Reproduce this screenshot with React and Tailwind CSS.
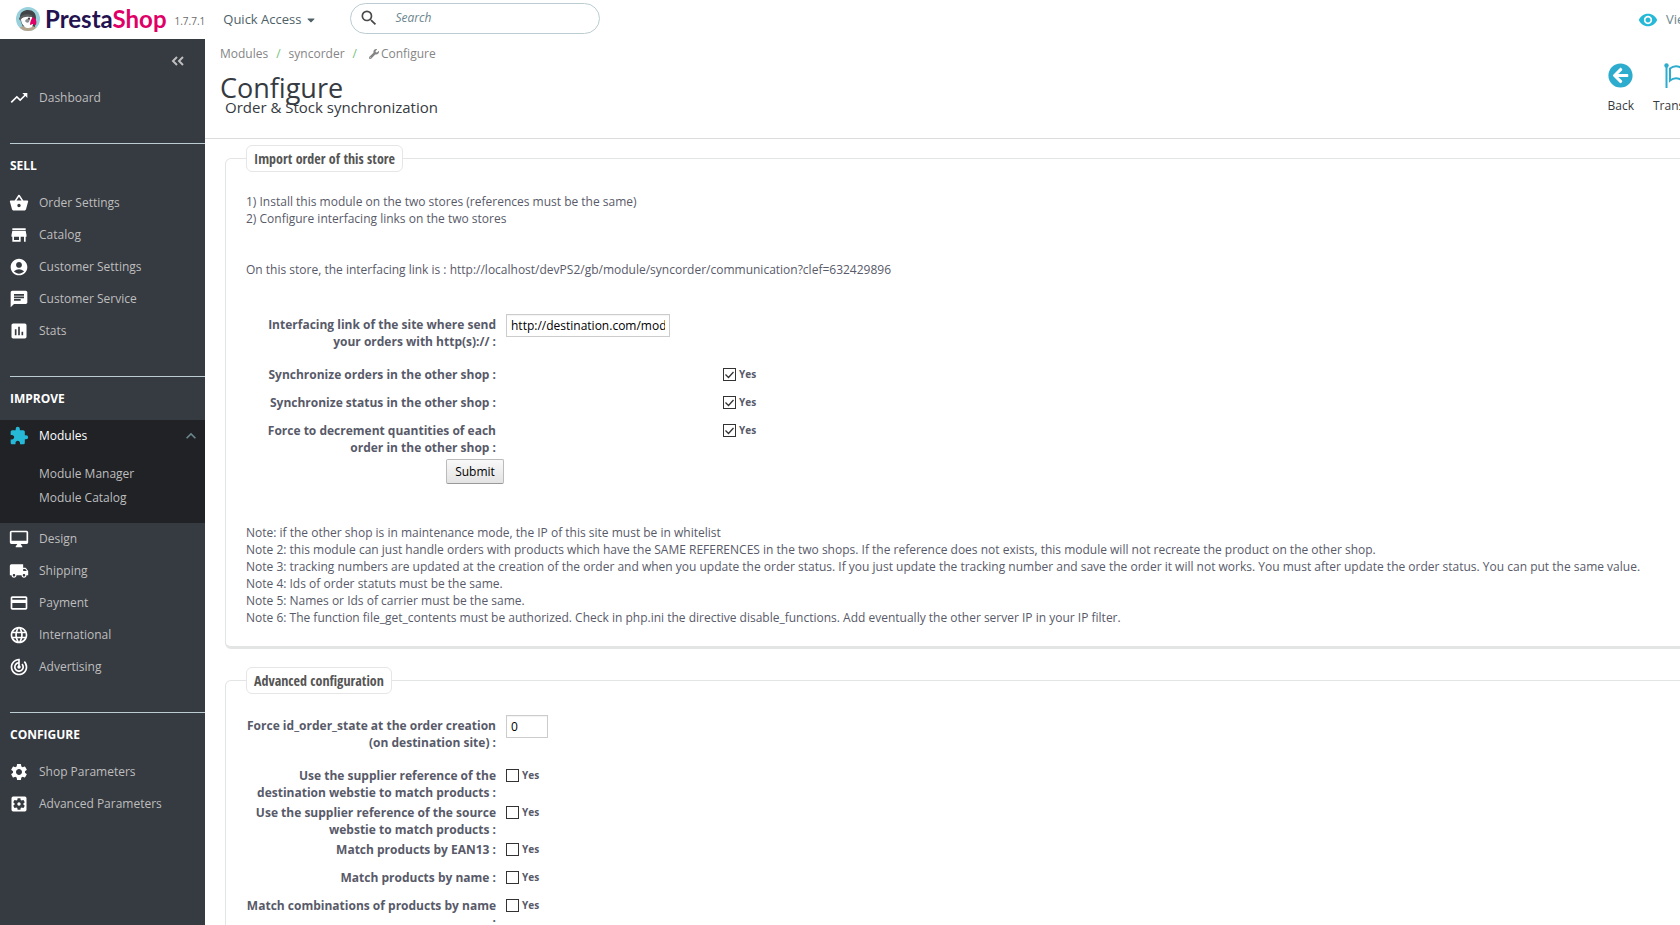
import React, { useState } from "react";
import {
  MdTrendingUp,
  MdShoppingBasket,
  MdStore,
  MdAccountCircle,
  MdChat,
  MdAssessment,
  MdExtension,
  MdLocalShipping,
  MdPayment,
  MdLanguage,
  MdTrackChanges,
  MdSettings,
  MdSettingsApplications,
  MdKeyboardArrowUp,
  MdSearch,
  MdVisibility,
} from "react-icons/md";
import { FaWrench, FaArrowCircleLeft, FaCaretDown } from "react-icons/fa";

const DesktopIcon = ({ size, className }) => (
  <svg width={size} height={size} viewBox="0 0 24 24" fill="currentColor" className={className} aria-hidden="true">
    <path d="M21 2H3c-1.100 0-2 .9-2 2v12c0 1.100.9 2 2 2h7l-2 3v1h8v-1l-2-3h7c1.100 0 2-.9 2-2V4c0-1.100-.9-2-2-2zm0 12H3V4h18v10z" />
  </svg>
);

const sellItems = [
  { label: "Order Settings", icon: MdShoppingBasket },
  { label: "Catalog", icon: MdStore },
  { label: "Customer Settings", icon: MdAccountCircle },
  { label: "Customer Service", icon: MdChat },
  { label: "Stats", icon: MdAssessment },
];

const improveItems = [
  { label: "Design", icon: DesktopIcon },
  { label: "Shipping", icon: MdLocalShipping },
  { label: "Payment", icon: MdPayment },
  { label: "International", icon: MdLanguage },
  { label: "Advertising", icon: MdTrackChanges },
];

const configureItems = [
  { label: "Shop Parameters", icon: MdSettings },
  { label: "Advanced Parameters", icon: MdSettingsApplications },
];

const Puffin = () => (
  <svg width="24" height="24" viewBox="0 0 24 24" aria-hidden="true">
    <clipPath id="badge">
      <circle cx="12" cy="12" r="12" />
    </clipPath>
    <g clipPath="url(#badge)">
      <rect width="24" height="24" fill="#98d1dc" />
      <path d="M4 10C4 5 8 3 12 3c5 0 8 3 8 8l-1 9H7c-1-3-3-6-3-10z" fill="#414547" />
      <path d="M3 24v-3c4-3 14-3 18 0v3z" fill="#b5a48c" />
      <path d="M5 12c2-3 7-4 11-2l2 5-2 5c-3 2-7 1-8-1-2-2-3-4-3-7z" fill="#fff" />
      <path d="M3 11c3-4 9-5 14-2l-3 1c-4-1-7 0-11 3z" fill="#5b5f60" />
      <path d="M9 14c1-2 3-3 5-2l-1 3c-1 1-3 1-4-1z" fill="#8b8f90" />
      <path d="M17 10c3 2 4 4 3 8l-3-1-3 1c0-3 1-6 3-8z" fill="#df0067" />
      <circle cx="13" cy="11.500" r="1" fill="#333" />
    </g>
  </svg>
);

const FlagIcon = () => (
  <svg width="30" height="25" viewBox="0 0 30 25" fill="none" stroke="#2eacce" strokeWidth="2" aria-hidden="true">
    <circle cx="2.500" cy="2.500" r="2.200" fill="#2eacce" stroke="none" />
    <path d="M2.500 3v22" />
    <path d="M6 5.500c3-2.500 7-3 11-1s7 2 12 0v12c-5 2-8 2-12 0s-8-1.500-11 1z" />
  </svg>
);

const NavItem = ({ label, icon: Icon }) => (
  <li>
    <a href="#" className="flex h-8 items-center gap-[10px] pl-[9px] text-[#bebebe]">
      <Icon size={20} className="shrink-0 text-white" />
      {label}
    </a>
  </li>
);

const NavSection = ({ title, children }) => (
  <section className="mt-[29px]">
    <div className="ml-[10px] flex h-11 items-center border-t border-[#bbcdd2]">
      <h2 className="font-bold text-white">{title}</h2>
    </div>
    <ul>{children}</ul>
  </section>
);

const Sidebar = () => (
  <nav className="w-[205px] shrink-0 bg-[#363a41] text-[12px]">
    <div className="flex h-[43px] items-center justify-end pr-5">
      <button aria-label="Collapse menu" className="text-[#bebebe]">
        <svg width="14" height="10" viewBox="0 0 14 10" fill="none" stroke="currentColor" strokeWidth="2">
          <path d="M6 1L2 5l4 4M12 1L8 5l4 4" />
        </svg>
      </button>
    </div>
    <ul>
      <NavItem label="Dashboard" icon={MdTrendingUp} />
    </ul>
    <NavSection title="SELL">
      {sellItems.map((item) => (
        <NavItem key={item.label} {...item} />
      ))}
    </NavSection>
    <NavSection title="IMPROVE">
      <li className="bg-[#202226] pb-[13px]">
        <a href="#" className="flex h-8 items-center gap-[10px] pr-1 pl-[9px] text-white">
          <MdExtension size={20} className="text-[#25b9d7]" />
          <span className="grow">Modules</span>
          <MdKeyboardArrowUp size={20} className="text-[#6c868e]" />
        </a>
        <ul className="pt-[10px] pl-[39px] leading-6 text-[#bebebe]">
          <li>
            <a href="#">Module Manager</a>
          </li>
          <li>
            <a href="#">Module Catalog</a>
          </li>
        </ul>
      </li>
      {improveItems.map((item) => (
        <NavItem key={item.label} {...item} />
      ))}
    </NavSection>
    <NavSection title="CONFIGURE">
      {configureItems.map((item) => (
        <NavItem key={item.label} {...item} />
      ))}
    </NavSection>
  </nav>
);

const TopBar = () => (
  <header className="flex h-[39px] shrink-0 items-center overflow-hidden pl-4">
    <a href="#" className="flex items-center gap-[5px] pb-px">
      <Puffin />
      <span className="font-[Lato,sans-serif] text-[24px] leading-7 font-bold text-[#24114f]">
        Presta<span className="text-[#df0067]">Shop</span>
      </span>
    </a>
    <span className="ml-2 pt-1 text-[10px] text-[#6c6c6c]">1.7.7.1</span>
    <button className="ml-[18px] flex items-center gap-1 text-[13px] text-[#4e6167]">
      Quick Access
      <FaCaretDown size={12} />
    </button>
    <label className="mb-[3px] ml-[33px] flex h-[31px] w-[250px] items-center rounded-full border border-[#bbcdd2] pl-2">
      <MdSearch size={20} className="shrink-0 text-[#4a4a4a]" />
      <input
        type="text"
        aria-label="Search"
        placeholder="Search"
        className="ml-4 w-40 text-[12px] italic outline-none placeholder:text-[#6c868e]"
      />
    </label>
    <a href="#" className="-mr-[76px] ml-auto flex w-[118px] shrink-0 items-center gap-2 text-[13px] whitespace-nowrap text-[#6c868e]">
      <MdVisibility size={20} className="shrink-0 text-[#25b9d7]" />
      View my shop
    </a>
  </header>
);

const PageHead = () => (
  <div className="flex h-[100px] justify-between border-b border-[#dcdcdc] pl-[15px]">
    <div>
      <ol className="flex items-center pt-[5px] text-[12px] leading-5 text-[#858585]">
        <li>
          <a href="#">Modules</a>
        </li>
        <li className="px-2 text-[#72c279]">/</li>
        <li>
          <a href="#">syncorder</a>
        </li>
        <li className="px-2 text-[#72c279]">/</li>
        <li className="flex items-center gap-[2px] pl-1">
          <FaWrench size={10} />
          Configure
        </li>
      </ol>
      <h1 className="pt-[6px] text-[27px] leading-9 text-[#363a41]">Configure</h1>
      <h4 className="-mt-[9px] pl-[5px] text-[15px] leading-5 text-[#363a41]">Order &amp; Stock synchronization</h4>
    </div>
    <div className="-mr-[32px] flex shrink-0 gap-3 pt-6 text-[12px] text-[#363a41]">
      <a href="#" className="flex flex-col items-center gap-[9px]">
        <FaArrowCircleLeft size={25} className="text-[#2eacce]" />
        Back
      </a>
      <a href="#" className="flex w-[66px] flex-col items-center gap-[9px] whitespace-nowrap">
        <FlagIcon />
        Translate
      </a>
    </div>
  </div>
);

const Panel = ({ title, children }) => (
  <fieldset className="mb-[18px] rounded-md border border-b-3 border-[#e3e4e4] px-5 pt-[21px] pb-5">
    <legend className="rounded-md border border-[#e6e6e6] px-[7px] font-['Ubuntu_Condensed','Open_Sans_Condensed','Liberation_Sans_Narrow','Roboto_Condensed','DejaVu_Sans_Condensed',sans-serif] text-[14px] leading-[25px] font-bold text-[#555]">
      {title}
    </legend>
    {children}
  </fieldset>
);

const TextRow = ({ id, label, value, width }) => {
  const [text, setText] = useState(value);
  return (
    <div className="mb-4 flex items-start gap-[10px]">
      <label htmlFor={id} className="w-[250px] pt-[2px] text-right font-bold">
        {label}
      </label>
      <input
        id={id}
        type="text"
        value={text}
        onChange={(e) => setText(e.target.value)}
        className={`${width} h-[23px] border border-[#ccc] px-1 text-[12px] text-black inset-shadow-xs`}
      />
    </div>
  );
};

const CheckRow = ({ id, label, checked = false, wide = false }) => {
  const [on, setOn] = useState(checked);
  return (
    <div className="flex min-h-7 items-start gap-[10px] pb-[3px]">
      <label htmlFor={id} className="w-[250px] text-right font-bold">
        {label}
      </label>
      <div className={`flex h-4 items-center gap-[3px] ${wide ? "pl-[217px]" : ""}`}>
        <span className="relative flex">
          <input
            id={id}
            type="checkbox"
            checked={on}
            onChange={() => setOn(!on)}
            className="h-[13px] w-[13px] appearance-none border border-[#333] bg-white"
          />
          {on && (
            <svg
              className="pointer-events-none absolute inset-0"
              width="13"
              height="13"
              viewBox="0 0 13 13"
              fill="none"
              stroke="#333"
              strokeWidth="1.300"
            >
              <path d="M2.500 6.500l3 3 5-5.500" />
            </svg>
          )}
        </span>
        <label htmlFor={id} className="text-[10px] leading-4 font-bold">
          Yes
        </label>
      </div>
    </div>
  );
};

const App = () => {
  return (
    <div className="flex h-screen flex-col overflow-hidden bg-white font-['Open_Sans',sans-serif]">
      <TopBar />
      <div className="flex min-h-0 grow">
        <Sidebar />
        <main className="min-w-0 grow overflow-hidden">
          <PageHead />
          <div className="-mr-5 pt-[6px] pl-5 text-[12px] leading-[17px] text-[#585a69]">
            <Panel title="Import order of this store">
              <p>1) Install this module on the two stores (references must be the same)</p>
              <p>2) Configure interfacing links on the two stores</p>
              <p className="mt-[34px] mb-9">
                On this store, the interfacing link is :
                http://localhost/devPS2/gb/module/syncorder/communication?clef=632429896
              </p>
              <form onSubmit={(e) => e.preventDefault()}>
                <TextRow
                  id="link"
                  label="Interfacing link of the site where send your orders with http(s):// :"
                  value="http://destination.com/module/syncorder/communication"
                  width="w-[164px]"
                />
                <CheckRow id="orders" label="Synchronize orders in the other shop :" checked wide />
                <CheckRow id="status" label="Synchronize status in the other shop :" checked wide />
                <CheckRow id="stock" label="Force to decrement quantities of each order in the other shop :" checked wide />
                <button
                  type="submit"
                  className="mb-10 ml-[200px] block h-[25px] w-[58px] rounded-xs border border-[#bbb] border-b-[#999] bg-linear-to-b from-[#f9f9f9] to-[#e3e3e3] text-black"
                >
                  Submit
                </button>
              </form>
              <p>Note: if the other shop is in maintenance mode, the IP of this site must be in whitelist</p>
              <p>
                Note 2: this module can just handle orders with products which have the SAME REFERENCES in the two
                shops. If the reference does not exists, this module will not recreate the product on the other shop.
              </p>
              <p>
                Note 3: tracking numbers are updated at the creation of the order and when you update the order status.
                If you just update the tracking number and save the order it will not works. You must after update the
                order status. You can put the same value.
              </p>
              <p>Note 4: Ids of order statuts must be the same.</p>
              <p>Note 5: Names or Ids of carrier must be the same.</p>
              <p>
                Note 6: The function file_get_contents must be authorized. Check in php.ini the directive
                disable_functions. Add eventually the other server IP in your IP filter.
              </p>
            </Panel>
            <Panel title="Advanced configuration">
              <TextRow
                id="state"
                label="Force id_order_state at the order creation (on destination site) :"
                value="0"
                width="w-[42px]"
              />
              <CheckRow id="supplier-dest" label="Use the supplier reference of the destination webstie to match products :" />
              <CheckRow id="supplier-src" label="Use the supplier reference of the source webstie to match products :" />
              <CheckRow id="ean" label="Match products by EAN13 :" />
              <CheckRow id="name" label="Match products by name :" />
              <CheckRow id="combi" label="Match combinations of products by name :" />
            </Panel>
          </div>
        </main>
      </div>
    </div>
  );
};

export default App;
